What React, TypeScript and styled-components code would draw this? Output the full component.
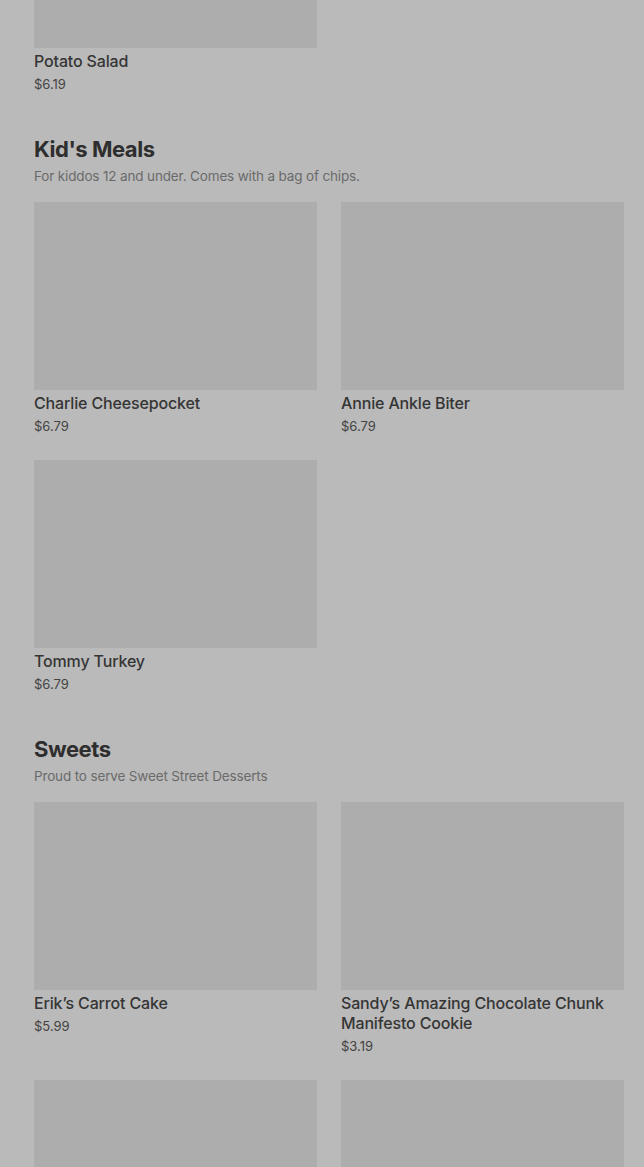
import styled, { createGlobalStyle } from "styled-components"

const GlobalStyle = createGlobalStyle`
body{
margin:0;
background-color:#bababa;
font-family: Inter, "Noto Sans", Arial, sans-serif;
}
`

type Item = { name: string; price: string }
type Section = { title?: string; note?: string; items: Item[] }

const sections: Section[] = [
  { items: [{ name: "Potato Salad", price: "$6.19" }] },
  {
    title: "Kid's Meals",
    note: "For kiddos 12 and under. Comes with a bag of chips.",
    items: [
      { name: "Charlie Cheesepocket", price: "$6.79" },
      { name: "Annie Ankle Biter", price: "$6.79" },
      { name: "Tommy Turkey", price: "$6.79" },
    ],
  },
  {
    title: "Sweets",
    note: "Proud to serve Sweet Street Desserts",
    items: [
      { name: "Erik’s Carrot Cake", price: "$5.99" },
      { name: "Sandy’s Amazing Chocolate Chunk Manifesto Cookie", price: "$3.19" },
      { name: "", price: "" },
      { name: "", price: "" },
    ],
  },
]

const App = () => {
  return (
    <>
      <GlobalStyle />
      <Page>
        {sections.map((s, i) => (
          <Block key={i} first={i === 0}>
            {s.title && <Title>{s.title}</Title>}
            {s.note && <Note>{s.note}</Note>}
            <Grid>
              {s.items.map((it, j) => (
                <Card key={j}>
                  <Pic />
                  {it.name && <Name>{it.name}</Name>}
                  {it.price && <Price>{it.price}</Price>}
                </Card>
              ))}
            </Grid>
          </Block>
        ))}
      </Page>
    </>
  )
}

export default App

const Page = styled.div`
padding: 0 20px 0 34px;
margin-top: -140px;
height: 1307px;
overflow: hidden;
`
const Block = styled.section<{ first?: boolean }>`
margin-top: ${(p) => (p.first ? "0" : "40px")};
`
const Title = styled.div`
font-size: 22px;
font-weight: 700;
line-height: 30px;
letter-spacing: -0.45px;
color: #2e2e2e;
margin-bottom: 2px;
`
const Note = styled.div`
font-size: 13.5px;
line-height: 20px;
color: #6a6a6a;
letter-spacing: -0.15px;
margin-bottom: 16px;
`
const Grid = styled.div`
display: grid;
grid-template-columns: 283px 283px;
column-gap: 24px;
row-gap: 24px;
`
const Card = styled.div`
display: flex;
flex-direction: column;
`
const Pic = styled.div`
height: 188px;
background-color: #adadad;
margin-bottom: 3px;
`
const Name = styled.div`
font-size: 16px;
font-weight: 500;
line-height: 20px;
letter-spacing: -0.15px;
color: #353535;
`
const Price = styled.div`
font-size: 13px;
line-height: 20px;
color: #434343;
margin-top: 3px;
`
